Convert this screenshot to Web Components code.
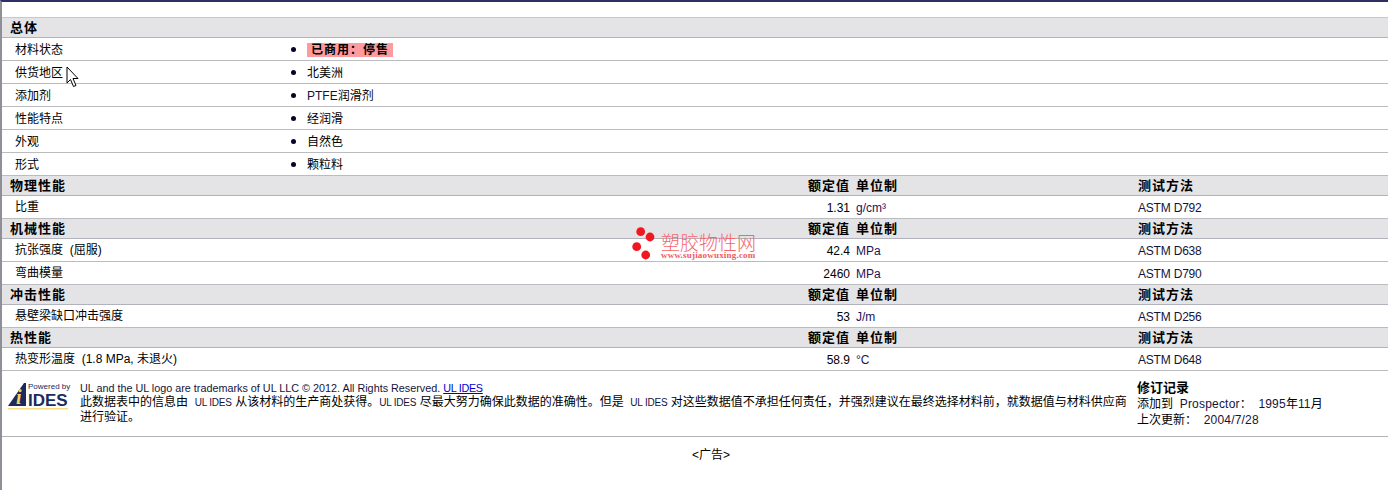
<!DOCTYPE html>
<html lang="zh">
<head>
<meta charset="utf-8">
<title>塑胶物性</title>
<style>
  html, body { margin: 0; height: 100%; background: #fff; }
  body {
    font: 12px "Liberation Sans", "Noto Sans CJK SC", sans-serif;
    color: #000;
    overflow: hidden;
  }
  .en { color: #14143a; }
</style>
</head>
<body>
<ds-sheet>
  <ds-head first>总体</ds-head>
  <ds-bullet name="材料状态"><ds-status>已商用：停售</ds-status></ds-bullet>
  <ds-bullet name="供货地区">北美洲</ds-bullet>
  <ds-bullet name="添加剂"><span class="en">PTFE</span>润滑剂</ds-bullet>
  <ds-bullet name="性能特点">经润滑</ds-bullet>
  <ds-bullet name="外观">自然色</ds-bullet>
  <ds-bullet name="形式">颗粒料</ds-bullet>

  <ds-head columns>物理性能</ds-head>
  <ds-prop name="比重" value="1.31" unit="g/cm³" method="ASTM D792"></ds-prop>

  <ds-head columns>机械性能</ds-head>
  <ds-prop name="抗张强度&nbsp; (屈服)" value="42.4" unit="MPa" method="ASTM D638"></ds-prop>
  <ds-prop name="弯曲模量" value="2460" unit="MPa" method="ASTM D790"></ds-prop>

  <ds-head columns>冲击性能</ds-head>
  <ds-prop name="悬壁梁缺口冲击强度" value="53" unit="J/m" method="ASTM D256"></ds-prop>

  <ds-head columns>热性能</ds-head>
  <ds-prop name="热变形温度&nbsp; (1.8 MPa, 未退火)" value="58.9" unit="°C" method="ASTM D648"></ds-prop>

  <ds-footer></ds-footer>
  <ds-ad>&lt;广告&gt;</ds-ad>

  <ds-watermark></ds-watermark>
  <ds-cursor></ds-cursor>
</ds-sheet>

<script>
  // small helper, every element gets its own open shadow root
  function define(tag, html, setup) {
    customElements.define(tag, class extends HTMLElement {
      constructor() {
        super();
        this.attachShadow({ mode: "open" });
        this.shadowRoot.innerHTML = html;
      }
      connectedCallback() {
        if (setup) setup(this, this.shadowRoot);
      }
    });
  }

  const fill = (el, root) => {
    root.querySelectorAll("[data-attr]").forEach((node) => {
      node.textContent = el.getAttribute(node.dataset.attr);
    });
  };

  define("ds-sheet", `
    <style>
      :host {
        display: block;
        position: relative;
        height: 488px;
        border-top: 2px solid #2e2e63;
        border-left: 2px solid #8f8f98;
      }
      .top { height: 15px; }
    </style>
    <div class="top"></div>
    <slot></slot>
  `);

  define("ds-head", `
    <style>
      :host {
        display: grid;
        grid-template-columns: 1fr 42px 288px 250px;
        height: 19px;
        align-items: center;
        background: #e4e4e6;
        border-bottom: 1px solid #b2b2bc;
        font-size: 13px;
        font-weight: bold;
        letter-spacing: 1px;
        line-height: 19px;
      }
      :host([first]) { border-top: 1px solid #c8c8cc; }
      .title { padding-left: 8px; }
      .value { grid-column: 2; white-space: nowrap; }
      .unit { grid-column: 3; padding-left: 6px; }
      .method { grid-column: 4; }
      :host(:not([columns])) .col { display: none; }
    </style>
    <div class="title"><slot></slot></div>
    <div class="col value">额定值</div>
    <div class="col unit">单位制</div>
    <div class="col method">测试方法</div>
  `);

  define("ds-bullet", `
    <style>
      :host {
        display: grid;
        grid-template-columns: 288px 17px 1fr;
        height: 22px;
        align-items: center;
        border-bottom: 1px solid #bcbcc0;
      }
      .name { padding: 0 0 2px 13px; }
      .val { padding-bottom: 2px; }
      .dot {
        width: 5px;
        height: 5px;
        border-radius: 50%;
        background: #05052a;
        margin-left: 1px;
      }
    </style>
    <div class="name" data-attr="name"></div>
    <div class="dot"></div>
    <div class="val"><slot></slot></div>
  `, fill);

  define("ds-status", `
    <style>
      :host {
        display: inline-block;
        vertical-align: top;
        margin-top: 4px;
        background: #ff9a9e;
        padding: 0 4px;
        font-weight: bold;
        line-height: 14px;
        letter-spacing: 1px;
      }
    </style>
    <slot></slot>
  `);

  define("ds-prop", `
    <style>
      :host {
        display: grid;
        grid-template-columns: 1fr 42px 288px 250px;
        height: 22px;
        border-bottom: 1px solid #bcbcc0;
        line-height: 14px;
      }
      .name { padding: 4px 0 0 13px; white-space: nowrap; }
      .cell { padding-top: 5px; white-space: nowrap; }
      .value { text-align: right; }
      .unit { padding-left: 6px; color: #1c1456; }
      .method { color: #14143a; letter-spacing: -0.2px; }
    </style>
    <div class="name" data-attr="name"></div>
    <div class="cell value" data-attr="value"></div>
    <div class="cell unit" data-attr="unit"></div>
    <div class="cell method" data-attr="method"></div>
  `, fill);

  define("ds-logo", `
    <style>
      :host { display: block; width: 64px; height: 30px; }
      svg { display: block; overflow: visible; }
      text { font-family: "Liberation Sans", sans-serif; fill: #1c2a5c; }
      .i { font: italic bold 20px "Liberation Serif", serif; fill: #f3d35a; }
    </style>
    <svg width="64" height="30" viewBox="0 0 64 30">
      <path d="M0 25 L16 2 L18 2 L18 25 Z" fill="#1c2a5c"/>
      <text class="i" x="8" y="23">i</text>
      <rect x="0" y="27" width="60" height="1.5" fill="#f5dc86"/>
      <text x="20" y="8" font-size="8">Powered by</text>
      <text x="20" y="25" font-size="17" font-weight="bold">IDES</text>
    </svg>
  `);

  define("ds-footer", `
    <style>
      :host {
        display: grid;
        grid-template-columns: 78px 1057px 1fr;
        height: 65px;
        border-bottom: 1px solid #b2b2b8;
      }
      ds-logo { margin: 10px 0 0 6px; }
      .legal { padding-top: 10px; line-height: 14px; }
      .legal .en { color: #14143a; font-size: 10px; letter-spacing: -0.2px; }
      .legal .line { color: #14143a; font-size: 10.8px; }
      a { color: #0000d0; letter-spacing: -0.3px; }
      .rev { padding-top: 8px; line-height: 16px; }
      .rev b { display: block; font-size: 13px; line-height: 17px; }
      .rev .en { color: #14143a; letter-spacing: 0.2px; }
    </style>
    <ds-logo></ds-logo>
    <div class="legal">
      <div class="line">UL and the UL logo are trademarks of UL LLC © 2012. All Rights Reserved. <a href="#">UL IDES</a></div>
      <div>此数据表中的信息由&nbsp; <span class="en">UL IDES</span> 从该材料的生产商处获得。<span class="en">UL IDES</span> 尽最大努力确保此数据的准确性。但是&nbsp; <span class="en">UL IDES</span> 对这些数据值不承担任何责任，并强烈建议在最终选择材料前，就数据值与材料供应商<br>进行验证。</div>
    </div>
    <div class="rev">
      <b>修订记录</b>
      <div>添加到&nbsp; <span class="en">Prospector</span>：&nbsp; <span class="en">1995</span>年<span class="en">11</span>月</div>
      <div>上次更新：&nbsp; <span class="en">2004/7/28</span></div>
    </div>
  `);

  define("ds-ad", `
    <style>
      :host {
        display: block;
        text-align: center;
        padding: 10px 0 0 32px;
        line-height: 16px;
      }
    </style>
    <slot></slot>
  `);

  // watermark sits over the table rows
  define("ds-watermark", `
    <style>
      :host {
        position: absolute;
        left: 628px;
        top: 224px;
        width: 130px;
        height: 38px;
        pointer-events: none;
      }
      svg { position: absolute; left: 0; top: 0; }
      .big {
        position: absolute;
        left: 31px;
        top: 6px;
        font: 300 19px/19px "Noto Sans CJK SC", sans-serif;
        color: #f4676b;
        white-space: nowrap;
      }
      .url {
        position: absolute;
        left: 31px;
        top: 25px;
        font: bold 9px/9px "Liberation Serif", serif;
        letter-spacing: 0.2px;
        color: #ee5a60;
        white-space: nowrap;
      }
    </style>
    <svg width="32" height="38" viewBox="0 0 32 38">
      <circle cx="10.7" cy="5.7" r="4.4" fill="#f01820"/>
      <circle cx="20" cy="11" r="4.4" fill="#f01820"/>
      <circle cx="6.7" cy="20.7" r="4.4" fill="#f01820"/>
      <circle cx="15.7" cy="29" r="4.4" fill="#f01820"/>
    </svg>
    <div class="big">塑胶物性网</div>
    <div class="url">www.sujiaowuxing.com</div>
  `);

  // captured mouse pointer
  define("ds-cursor", `
    <style>
      :host { position: absolute; left: 64px; top: 64px; width: 14px; height: 22px; }
      svg { display: block; }
    </style>
    <svg width="14" height="22" viewBox="0 0 14 22">
      <path d="M1 1 V17 L4.5 13.5 L7.5 20.5 L10 19.5 L7 12.5 H12 Z" fill="#fff" stroke="#000" stroke-width="1"/>
    </svg>
  `);
</script>
</body>
</html>
